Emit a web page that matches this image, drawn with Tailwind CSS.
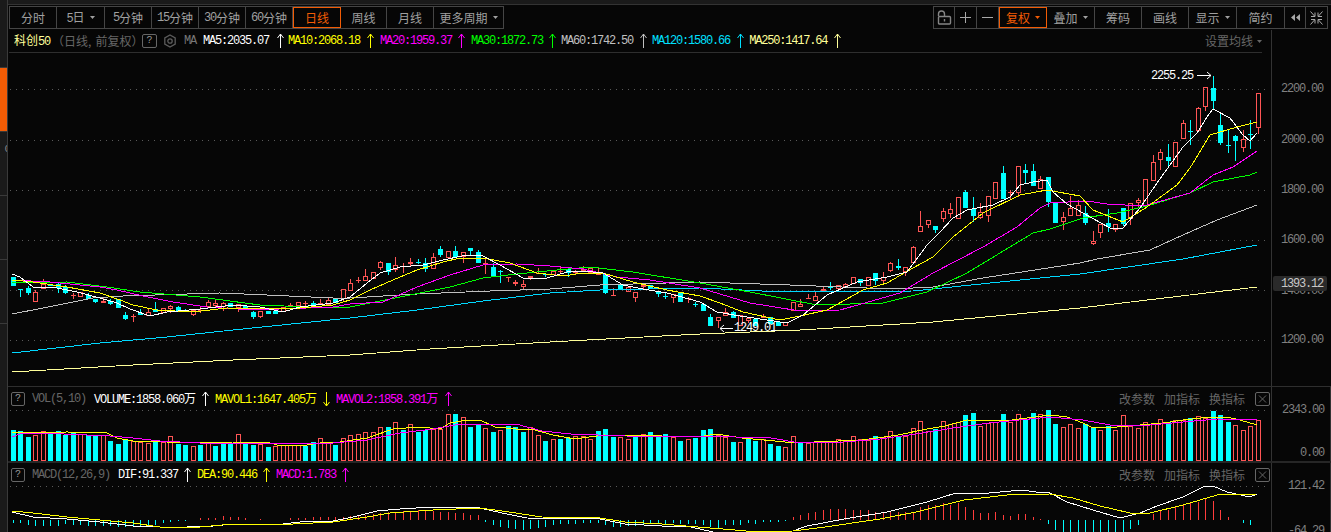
<!DOCTYPE html>
<html lang="zh">
<head>
<meta charset="utf-8">
<title>科创50</title>
<script src="https://cdn.jsdelivr.net/npm/@tailwindcss/browser@4"></script>
</head>
<body class="bg-[#060606]">
<div class="w-[1331px] h-[532px] flex overflow-hidden bg-[#060606] font-['Noto_Sans_CJK_SC',sans-serif] text-[12px] leading-none text-[#a0a0a0]">

  <aside class="w-[8px] h-full bg-[#1a1a1a] border-r border-[#3a3a3a] overflow-hidden shrink-0">
    <div class="h-[68px] border-b border-[#3a3a3a]"></div>
    <div class="h-[64px] bg-[#f25c05] border-b border-[#3a3a3a]"></div>
    <div class="h-[64px] border-b border-[#3a3a3a] flex items-center justify-end pb-[28px] text-[#888] font-['Liberation_Mono',monospace] text-[11px] -mr-[4px]">0</div>
    <div class="h-[64px] border-b border-[#3a3a3a]"></div>
    <div class="h-[64px] border-b border-[#3a3a3a]"></div>
  </aside>

  <main class="flex-1 flex flex-col min-w-0">
    <!-- toolbar -->
    <header class="h-[30px] shrink-0 flex flex-col">
      <div class="h-[5px] bg-[#1a1a1a] border-b border-[#333]"></div>
      <div class="flex justify-between pl-[1px] pr-[3px] pt-[1px]">
        <div class="flex h-[23px] border border-[#454545] border-r-0">
          <div class="w-[47px] flex items-center justify-center border-r border-[#454545]">分时</div>
          <div class="w-[48px] flex items-center justify-center gap-[5px] border-r border-[#454545]"><span><span class="font-['Liberation_Mono',monospace] text-[12px] tracking-[-1.2px]">5</span>日</span><svg width="5" height="3" viewBox="0 0 5 3"><path d="M0 0h5L2.5 3z" fill="#a0a0a0"/></svg></div>
          <div class="w-[47px] flex items-center justify-center border-r border-[#454545]"><span class="font-['Liberation_Mono',monospace] text-[12px] tracking-[-1.2px]">5</span>分钟</div>
          <div class="w-[47px] flex items-center justify-center border-r border-[#454545]"><span class="font-['Liberation_Mono',monospace] text-[12px] tracking-[-1.2px]">15</span>分钟</div>
          <div class="w-[47px] flex items-center justify-center border-r border-[#454545]"><span class="font-['Liberation_Mono',monospace] text-[12px] tracking-[-1.2px]">30</span>分钟</div>
          <div class="w-[47px] flex items-center justify-center border-r border-[#454545]"><span class="font-['Liberation_Mono',monospace] text-[12px] tracking-[-1.2px]">60</span>分钟</div>
          <div class="w-[48px] flex items-center justify-center text-[#f25c05] shadow-[inset_0_0_0_1px_#f25c05]">日线</div>
          <div class="w-[46px] flex items-center justify-center border-r border-[#454545]">周线</div>
          <div class="w-[47px] flex items-center justify-center border-r border-[#454545]">月线</div>
          <div class="w-[70px] flex items-center justify-center gap-[5px] border-r border-[#454545]">更多周期<svg width="5" height="3" viewBox="0 0 5 3"><path d="M0 0h5L2.5 3z" fill="#a0a0a0"/></svg></div>
        </div>
        <div class="flex h-[23px] border border-[#454545] border-r-0">
          <div class="w-[21px] flex items-center justify-center border-r border-[#454545]">
            <svg width="15" height="15" viewBox="0 0 15 15" fill="none" stroke="#858585" stroke-width="1.4"><rect x="1.5" y="6.5" width="12" height="7.5" rx="1"/><path d="M1.5 6V4a3 3 0 0 1 6 0v2.5"/><path d="M7.5 9v2.5"/></svg>
          </div>
          <div class="w-[22px] flex items-center justify-center border-r border-[#454545]"><svg width="11" height="11" viewBox="0 0 11 11" stroke="#a8a8a8"><path d="M0 5.5h11M5.5 0v11"/></svg></div>
          <div class="w-[22px] flex items-center justify-center border-r border-[#454545]"><svg width="11" height="11" viewBox="0 0 11 11" stroke="#a8a8a8"><path d="M0 5.5h11"/></svg></div>
          <div class="w-[48px] flex items-center justify-center gap-[5px] text-[#f25c05] shadow-[inset_0_0_0_1px_#f25c05]">复权<svg width="5" height="3" viewBox="0 0 5 3"><path d="M0 0h5L2.5 3z" fill="#f25c05"/></svg></div>
          <div class="w-[48px] flex items-center justify-center gap-[5px] border-r border-[#454545]">叠加<svg width="5" height="3" viewBox="0 0 5 3"><path d="M0 0h5L2.5 3z" fill="#a0a0a0"/></svg></div>
          <div class="w-[47px] flex items-center justify-center border-r border-[#454545]">筹码</div>
          <div class="w-[47px] flex items-center justify-center border-r border-[#454545]">画线</div>
          <div class="w-[48px] flex items-center justify-center gap-[5px] border-r border-[#454545]">显示<svg width="5" height="3" viewBox="0 0 5 3"><path d="M0 0h5L2.5 3z" fill="#a0a0a0"/></svg></div>
          <div class="w-[48px] flex items-center justify-center border-r border-[#454545]">简约</div>
          <div class="w-[21px] flex items-center justify-center border-r border-[#454545]"><svg width="9" height="7" viewBox="0 0 9 7" fill="#a8a8a8"><path d="M4 0v7L0 3.5zM9 0v7L5 3.5z"/></svg></div>
          <div class="w-[22px] flex items-center justify-center border-r border-[#454545]">
            <svg width="13" height="14" viewBox="0 0 13 14" fill="none" stroke="#a8a8a8"><path d="M.5.5l4 4.5M5 1.5V5.5H1M12.500 .5l-4 4.500M8 1.500V5.500h4M.500 13.500l4-4.500M5 12.500V8.500H1M12.500 13.500l-4-4.500M8 12.500V8.500h4"/></svg>
          </div>
        </div>
      </div>
    </header>

    <!-- main pane -->
    <section class="h-[356px] shrink-0 flex">
      <div class="w-[1263px] flex flex-col shrink-0">
        <div class="h-[23px] ml-[1px] w-[1253px] flex items-center border-b border-[#2e2e2e] font-['Liberation_Mono',monospace] text-[12px] tracking-[-1.2px]">
          <span class="ml-[5px] font-['Noto_Sans_CJK_SC',sans-serif] text-[12px] tracking-normal text-[#ffff99]">科创<span class="font-['Liberation_Mono',monospace] text-[12px] tracking-[-1.2px]">50</span></span>
          <span class="ml-[2px] w-[90px] font-['Noto_Sans_CJK_SC',sans-serif] text-[12px] tracking-normal text-[#666] whitespace-nowrap">（日线<span class="mr-[4px]">,</span>前复权）</span>
          <span class="w-[15px] h-[14px] border border-[#666] rounded-[2px] flex items-center justify-center text-[#999] text-[10px] tracking-normal">?</span>
          <svg class="ml-[6px]" width="14" height="14" viewBox="0 0 14 14" fill="none" stroke="#5c5c5c" stroke-width="1.300"><path d="M7 1l5.200 3v6L7 13l-5.200-3V4z"/><circle cx="7" cy="7" r="2.200"/></svg>
          <span class="ml-[7px] w-[19px] text-[#777]">MA</span>
          <span class="text-white">MA5:2035.07</span>
          <svg class="ml-[8px] text-white" width="7" height="14" viewBox="0 0 7 14" fill="none" stroke="currentColor"><path d="M3.500 0v14M.5 4l3-4 3 4"/></svg>
          <span class="ml-[4px] text-[#ffff00]">MA10:2068.18</span>
          <svg class="ml-[7px] text-[#ffff00]" width="7" height="14" viewBox="0 0 7 14" fill="none" stroke="currentColor"><path d="M3.500 0v14M.5 4l3-4 3 4"/></svg>
          <span class="ml-[6px] text-[#ff00ff]">MA20:1959.37</span>
          <svg class="ml-[6px] text-[#ff00ff]" width="7" height="14" viewBox="0 0 7 14" fill="none" stroke="currentColor"><path d="M3.500 0v14M.5 4l3-4 3 4"/></svg>
          <span class="ml-[6px] text-[#00ff00]">MA30:1872.73</span>
          <svg class="ml-[6px] text-[#00ff00]" width="7" height="14" viewBox="0 0 7 14" fill="none" stroke="currentColor"><path d="M3.500 0v14M.5 4l3-4 3 4"/></svg>
          <span class="ml-[5px] text-[#c0c0c0]">MA60:1742.50</span>
          <svg class="ml-[7px] text-[#c0c0c0]" width="7" height="14" viewBox="0 0 7 14" fill="none" stroke="currentColor"><path d="M3.500 0v14M.5 4l3-4 3 4"/></svg>
          <span class="ml-[5px] text-[#00e0ff]">MA120:1580.66</span>
          <svg class="ml-[7px] text-[#00e0ff]" width="7" height="14" viewBox="0 0 7 14" fill="none" stroke="currentColor"><path d="M3.500 0v14M.5 4l3-4 3 4"/></svg>
          <span class="ml-[5px] text-[#ffff99]">MA250:1417.64</span>
          <svg class="ml-[7px] text-[#ffff99]" width="7" height="14" viewBox="0 0 7 14" fill="none" stroke="currentColor"><path d="M3.500 0v14M.5 4l3-4 3 4"/></svg>
          <span class="ml-auto flex items-center gap-[4px] font-['Noto_Sans_CJK_SC',sans-serif] text-[12px] tracking-normal text-[#666]">设置均线<svg width="5" height="3" viewBox="0 0 5 3"><path d="M0 0h5L2.500 3z" fill="#666"/></svg></span>
        </div>
        <svg id="main" width="1263" height="333" viewBox="8 53 1263 333" class="block"></svg>
      </div>
      <div class="flex-1 relative border-l border-[#333] font-['Liberation_Mono',monospace] text-[12px] tracking-[-1.2px] text-[#808080]">
        <span class="absolute right-[8px] top-[53px]">2200.00</span>
        <span class="absolute right-[8px] top-[104px]">2000.00</span>
        <span class="absolute right-[8px] top-[154px]">1800.00</span>
        <span class="absolute right-[8px] top-[204px]">1600.00</span>
        <span class="absolute right-[8px] top-[255px]">1400.00</span>
        <span class="absolute right-[8px] top-[304px]">1200.00</span>
        <span class="absolute left-[1px] top-[246px] w-[54px] h-[15px] rounded-[2px] bg-[#2a2a2a] flex items-center justify-end pr-[4px] text-[#c8c8c8]">1393.12</span>
      </div>
    </section>

    <!-- volume pane -->
    <section class="h-[75px] shrink-0 flex border-t border-[#2e2e2e]">
      <div class="w-[1263px] shrink-0 flex flex-col">
        <div class="h-[23px] flex items-center pl-[3px] pr-[1px] font-['Liberation_Mono',monospace] text-[12px] tracking-[-1.2px]">
          <span class="w-[14px] h-[14px] border border-[#666] rounded-[2px] flex items-center justify-center text-[#999] text-[10px] tracking-normal">?</span>
          <span class="ml-[7px] w-[62px] text-[#666]">VOL(5,10)</span>
          <span class="text-white">VOLUME:1858.060<span class="font-['Noto_Sans_CJK_SC',sans-serif] text-[12px] tracking-normal">万</span></span>
          <svg class="ml-[6px] text-white" width="7" height="14" viewBox="0 0 7 14" fill="none" stroke="currentColor"><path d="M3.500 0v14M.5 4l3-4 3 4"/></svg>
          <span class="ml-[6px] text-[#ffff00]">MAVOL1:1647.405<span class="font-['Noto_Sans_CJK_SC',sans-serif] text-[12px] tracking-normal">万</span></span>
          <svg class="ml-[6px] rotate-180 text-[#ffff00]" width="7" height="14" viewBox="0 0 7 14" fill="none" stroke="currentColor"><path d="M3.500 0v14M.5 4l3-4 3 4"/></svg>
          <span class="ml-[6px] text-[#ff00ff]">MAVOL2:1858.391<span class="font-['Noto_Sans_CJK_SC',sans-serif] text-[12px] tracking-normal">万</span></span>
          <svg class="ml-[7px] text-[#ff00ff]" width="7" height="14" viewBox="0 0 7 14" fill="none" stroke="currentColor"><path d="M3.500 0v14M.5 4l3-4 3 4"/></svg>
          <span class="ml-auto flex items-center gap-[9px] font-['Noto_Sans_CJK_SC',sans-serif] text-[12px] tracking-normal text-[#666]">
            <span>改参数</span><span>加指标</span><span>换指标</span>
            <svg class="ml-[1px]" width="15" height="14" viewBox="0 0 15 14" fill="none" stroke="#666"><rect x=".5" y=".5" width="14" height="13" rx="1.500"/><path d="M4 3.500l7 7M11 3.500l-7 7"/></svg>
          </span>
        </div>
        <svg id="vol" width="1263" height="51" viewBox="8 410 1263 51" class="block"></svg>
      </div>
      <div class="flex-1 relative border-x border-[#333] font-['Liberation_Mono',monospace] text-[12px] tracking-[-1.2px] text-[#808080]">
        <span class="absolute right-[6px] top-[17px]">2343.00</span>
        <span class="absolute right-[6px] top-[60px]">0.00</span>
      </div>
    </section>
    <div class="h-[2px] shrink-0 bg-[#262626]"></div>

    <!-- MACD pane -->
    <section class="flex-1 flex min-h-0">
      <div class="w-[1263px] shrink-0 flex flex-col">
        <div class="h-[23px] flex items-center pl-[3px] pr-[1px] font-['Liberation_Mono',monospace] text-[12px] tracking-[-1.2px]">
          <span class="w-[14px] h-[14px] border border-[#666] rounded-[2px] flex items-center justify-center text-[#999] text-[10px] tracking-normal">?</span>
          <span class="ml-[7px] w-[86px] text-[#666]">MACD(12,26,9)</span>
          <span class="text-white">DIF:91.337</span>
          <svg class="ml-[6px] text-white" width="7" height="14" viewBox="0 0 7 14" fill="none" stroke="currentColor"><path d="M3.500 0v14M.5 4l3-4 3 4"/></svg>
          <span class="ml-[6px] text-[#ffff00]">DEA:90.446</span>
          <svg class="ml-[6px] text-[#ffff00]" width="7" height="14" viewBox="0 0 7 14" fill="none" stroke="currentColor"><path d="M3.500 0v14M.5 4l3-4 3 4"/></svg>
          <span class="ml-[6px] text-[#ff00ff]">MACD:1.783</span>
          <svg class="ml-[6px] text-[#ff00ff]" width="7" height="14" viewBox="0 0 7 14" fill="none" stroke="currentColor"><path d="M3.500 0v14M.5 4l3-4 3 4"/></svg>
          <span class="ml-auto flex items-center gap-[9px] font-['Noto_Sans_CJK_SC',sans-serif] text-[12px] tracking-normal text-[#666]">
            <span>改参数</span><span>加指标</span><span>换指标</span>
            <svg class="ml-[1px]" width="15" height="14" viewBox="0 0 15 14" fill="none" stroke="#666"><rect x=".5" y=".5" width="14" height="13" rx="1.500"/><path d="M4 3.500l7 7M11 3.500l-7 7"/></svg>
          </span>
        </div>
        <svg id="macd" width="1263" height="46" viewBox="8 486 1263 46" class="block"></svg>
      </div>
      <div class="flex-1 relative border-x border-[#333] font-['Liberation_Mono',monospace] text-[12px] tracking-[-1.2px] text-[#808080] overflow-hidden">
        <span class="absolute right-[6px] top-[17px]">121.42</span>
        <span class="absolute right-[6px] top-[62px]">-64.29</span>
      </div>
    </section>
  </main>
</div>

<script>
const NS='http://www.w3.org/2000/svg';
const RED='#ff5555',CY='#00ffff';
const cx=i=>Math.round(12.7+7.5*i);
function el(svg,n,a,t){const e=document.createElementNS(NS,n);for(const k in a)e.setAttribute(k,a[k]);if(t)e.textContent=t;svg.appendChild(e);return e;}
function rect(s,x,y,w,h,f){if(h<=0)return;el(s,'rect',{x,y,width:w,height:h,fill:f,'shape-rendering':'crispEdges'});}
function grid(s,y){el(s,'line',{x1:10,x2:1270,y1:y+.5,y2:y+.5,stroke:'#5a5a5a','stroke-dasharray':'1 5','shape-rendering':'crispEdges'});}
function line(s,p,c,w){el(s,'polyline',{points:p.map(q=>q.join(',')).join(' '),fill:'none',stroke:c,'stroke-width':w||1,'shape-rendering':'crispEdges'});}
function hollow(s,x,y,w,h,c){rect(s,x,y,w,1,c);rect(s,x,y+h-1,w,1,c);rect(s,x,y,1,h,c);rect(s,x+w-1,y,1,h,c);}

/* ---- candles: [cyan?, bodyTop, bodyBottom, wickTop, wickBottom] in crop coordinates ---- */
const candles=[];
function add(base,list){for(const r of list){const f=z=>base+z/3;candles.push([r[0],f(r[1]),f(r[2]),f(r[3]===undefined?r[1]:r[3]),f(r[4]===undefined?r[2]:r[4])]);}}
add(60,[[1,652,678],[1,688,690,688,710],[1,684,699,678,705],[0,696,725,690,725],[0,672,688,658,688],[1,672,678],[1,672,685,665,698],[1,680,698,675,702],[0,705,709,698,717],[0,695,710],[1,705,718,698,718],[1,717,725,717,730],[0,724,728,712,728],[1,723,731,718,735],[1,718,743],[1,765,776,757,780],[0,767,769,762,785],[1,758,764,748,764],[0,755,769,745,769],[1,748,755,726,755],[0,745,760],[0,739,747,735,758],[1,742,752,738,752],[1,752,757,748,757],[0,750,764,750,767],[0,750,752,742,760],[0,727,742,720,745],[0,730,737,720,742],[0,730,740,725,752],[1,730,742],[0,733,745,733,755],[1,738,748],[1,755,770,752,776],[0,752,770,752,773],[1,752,762],[1,752,762],[0,740,755],[0,735,742,730,742],[0,727,737],[0,728,730,722,737],[1,730,735,722,735],[0,730,733,716,733],[0,720,735,713,735],[1,713,728],[0,688,716,688,724]]);
add(230,[[0,160,182,148,182],[0,150,152,142,160],[0,139,152,118,152],[0,125,148],[0,97,113,92,120],[1,100,127,100,135],[0,106,120,82,125],[0,108,110,100,130],[0,95,102,85,107],[1,96,98,88,103],[1,100,117,85,125],[0,80,118,70,118],[1,58,75,48,80],[0,64,83],[1,64,80,48,82],[0,65,82,65,98],[1,55,63,55,77],[1,67,98,60,98],[0,100,105,85,132],[1,111,140,100,140],[1,122,124,120,158],[0,140,142,140,155],[0,157,163,150,168],[0,163,170,150,177],[0,137,143,137,150],[0,130,133,115,133],[1,132,134,132,141],[0,122,134],[0,124,126,112,132],[1,116,130,116,140],[0,125,127,120,133],[0,118,124,108,124],[0,115,130],[0,125,136,115,136],[1,132,188,132,192],[0,195,197,175,197],[1,165,178],[0,170,185],[0,185,203,185,215],[0,165,170,160,178],[1,165,177],[1,182,191,182,200],[1,198,200,190,207],[0,192,203,192,218],[1,190,215],[0,205,207,200,218],[1,222,224,215,230]]);
add(150,[[1,462,482],[1,500,527,492,527],[0,502,512,502,535],[0,485,497,475,497],[1,487,503,483,503],[0,495,527],[0,503,513,503,520],[1,507,528],[0,498,505,493,505],[1,500,523],[1,517,527],[0,517,527],[0,457,483],[0,462,470,448,470],[0,445,448,432,448],[0,438,452,425,452],[0,418,422,412,425],[1,410,412,397,420],[0,404,416],[0,403,412,398,412],[0,382,402],[1,388,400,388,407],[0,382,408],[1,370,393,370,405],[0,382,392,367,405],[0,340,362,335,367],[1,349,354,327,360],[0,352,365,352,377],[0,292,338,287,338],[0,229,245,183,245],[0,211,224,211,233],[1,228,240,228,248],[0,184,207,175,215],[0,178,191,158,203],[0,142,208],[1,126,175,120,175],[1,178,197,141,215],[0,187,203,160,208],[0,139,197,139,215],[0,97,148],[1,70,148,48,148],[0,125,127,120,150],[0,48,128,48,140],[1,60,68,42,100],[1,64,107,42,107],[0,88,117,78,117],[1,82,155,82,172]]);
add(60,[[1,427,490],[0,472,485,456,510],[0,445,467,408,467],[0,435,467,420,467],[1,460,490,438,495],[0,543,551,513,555],[0,492,518,492,533],[1,490,500,448,515],[0,492,510,492,515],[1,443,492,443,498],[0,430,477,430,495],[0,421,430,415,443],[0,357,442],[0,306,362,285,362],[0,277,299,267,330],[1,291,303,252,320],[0,247,320],[0,190,236,180,236],[1,213,215,180,255],[0,145,212,140,212],[0,82,140,82,152],[1,85,122,48,150],[1,196,248,160,255],[1,255,257,210,278],[1,228,242,225,303],[0,238,265,210,276],[1,222,224,180,267],[0,100,205,98,222]]);

/* ---- moving averages ---- */
const MA5=[[12,274],[20,277],[33,287],[57,288],[77,292],[100,298],[117,303],[130,309],[150,316],[167,312],[200,309],[233,305],[260,307],[283,312],[300,307],[333,303],[350,297],[367,283],[380,273],[400,267],[423,265],[443,260],[467,255],[483,256],[500,265],[523,278],[547,278],[567,272],[583,271],[603,273],[623,285],[643,289],[667,293],[700,302],[717,312],[740,316],[767,320],[787,323],[803,315],[827,295],[857,282],[887,277],[907,272],[927,245],[940,232],[953,218],[967,210],[993,205],[1010,197],[1020,185],[1033,182],[1047,180],[1053,192],[1067,204],[1083,213],[1110,228],[1123,228],[1140,208],[1157,183],[1183,147],[1197,133],[1207,117],[1213,109],[1230,118],[1243,135],[1250,141],[1257,133]];
const MA10=[[12,280],[33,282],[67,287],[100,293],[120,300],[133,305],[157,310],[193,312],[227,308],[267,309],[300,308],[333,305],[350,300],[370,290],[393,280],[417,270],[443,262],[460,258],[483,258],[510,263],[537,273],[563,276],[583,273],[603,273],[633,282],[667,290],[700,296],[720,303],[743,312],[780,320],[800,316],[827,310],[863,290],[887,283],[913,268],[933,257],[953,237],[983,213],[1020,195],[1047,190],[1080,196],[1093,210],[1123,222],[1147,207],[1177,185],[1190,168],[1210,135],[1237,127],[1257,122]];
const MA20=[[12,280],[50,282],[100,287],[117,290],[143,296],[173,302],[207,307],[253,310],[333,307],[350,304],[383,302],[417,287],[450,275],[483,265],[517,264],[550,266],[583,269],[617,277],[650,280],[700,288],[750,303],[800,311],[840,310],[900,293],[933,273],[983,247],[1017,227],[1040,208],[1050,203],[1087,201],[1107,204],[1143,206],[1190,193],[1213,175],[1233,167],[1257,151]];
const MA30=[[12,283],[67,282],[107,287],[140,292],[200,297],[260,305],[333,308],[350,307],[400,297],[450,287],[483,278],[517,274],[557,270],[590,267],[633,272],[700,283],[750,292],[817,305],[883,303],[927,292],[967,273],[1033,233],[1050,229],[1083,218],[1117,213],[1147,206],[1190,193],[1213,182],[1250,175],[1257,172]];
const MA60=[[12,314],[43,308],[93,298],[123,296],[220,293],[267,295],[333,298],[350,298],[417,294],[490,291],[550,289],[600,285],[700,282],[790,285],[893,289],[933,287],[983,278],[1080,263],[1097,259],[1150,250],[1183,235],[1217,220],[1257,205]];
const MA120=[[12,353],[100,343],[167,337],[233,330],[350,318],[417,310],[483,301],[550,293],[600,290],[700,288],[783,292],[913,291],[1000,282],[1080,274],[1183,259],[1257,245]];
const MA250=[[12,372],[133,365],[233,360],[350,355],[430,349],[550,342],[700,334],[800,330],[933,322],[1080,308],[1257,287]];

const m=document.getElementById('main');
[89,140,190,240,290,340].forEach(y=>grid(m,y));
candles.forEach((c,i)=>{
  const x=cx(i),col=c[0]?CY:RED,t=Math.round(c[1]),b=Math.round(c[2]),wt=Math.round(c[3]),wb=Math.round(c[4]);
  rect(m,x,wt,1,t-wt,col);rect(m,x,b,1,wb-b,col);
  if(c[0]||b-t<2){rect(m,x-2,t,5,Math.max(b-t,1),col);}
  else{hollow(m,x-2,t,5,b-t,col);}
});
line(m,MA250,'#ffff99');line(m,MA120,'#00d8ff');line(m,MA60,'#c0c0c0');line(m,MA30,'#00ff00');line(m,MA20,'#ff00ff');line(m,MA10,'#ffff00');line(m,MA5,'#ffffff');
const tx={'font-family':'Liberation Mono,monospace','font-size':12,'letter-spacing':'-1.2',fill:'#fff'};
el(m,'text',Object.assign({x:1151,y:79},tx),'2255.25');
el(m,'path',{d:'M1197 75.500h14M1207 72l4 3.500-4 3.500',fill:'none',stroke:'#fff'});
el(m,'text',Object.assign({x:734,y:331},tx),'1249.01');
el(m,'path',{d:'M720 328.500h13M724 325l-4 3.500 4 3.500',fill:'none',stroke:'#fff'});

/* ---- volume ---- */
const vol=[];
function addV(base,s){s.split(' ').forEach(t=>vol.push([t[0]==='c',base+parseInt(t.slice(1))/3]));}
addV(380,'c150 c153 c170 r165 r153 c155 c153 c165 c160 r162 c165 c165 r165 c183 c192 c178 r183 r185 r190 c187 r187 r168 c192 c195 r198 c195 r187 c197 c187 c192 r162 c185 c195 r192 c202 r197 r195 r195 r195 c197 c187 r175 r190 c195 r175 r165 r163 r155 r157 r140 c140 r127 c150 r133 c155 c150 r147 r147 r102 c102 r112 c140 c135');
addV(400,'r85 c96 r90 c78 c82 c96 r80 r106 c123 r118 c117 c115 r108 r108 r118 c93 c87 c112 r112 r118 c110 r102 c96 c108 c103 r112 c122 r118 c113 c90 c87 r106 r112 c125 r127 c118 c122 r118 c132 c137 r142 r108 c130 r130 r125 r123 r122 r118 r122 r108 r118 r120 c108 r110 r93 c108 r108 r85 r63 r92 c88 r63 r72 r66 c45 c38 r78 r68 r66 c42 r66 r42 c58 c38 r42 c30');
addV(380,'c132 r142 r133 r145 c133 c140 r150 c138 r150 r105 r137 r145 r125 r128 r118 c125 r120 r120 c114 r108 r115 c92 c105 c126 r135 r150 r138 r120');
const v=document.getElementById('vol');
grid(v,410);
vol.forEach((b,i)=>{const x=cx(i)-2,t=Math.round(b[1]),h=461-t;if(b[0])rect(v,x,t,5,h,CY);else hollow(v,x,t,5,h,RED);});
const VY=[[12,432],[22,432],[33,433],[67,432],[107,433],[117,438],[133,441],[167,442],[200,443],[233,442],[267,442],[277,445],[307,445],[320,443],[340,442],[367,438],[393,429],[420,427],[440,429],[450,423],[467,420],[480,420],[495,427],[516,429],[531,429],[553,435],[575,439],[604,435],[662,436],[698,437],[716,434],[742,438],[764,440],[796,443],[814,442],[862,440],[898,435],[927,429],[945,426],[967,420],[1004,421],[1050,415],[1067,417],[1083,423],[1093,428],[1117,427],[1140,425],[1163,423],[1183,420],[1210,417],[1227,417],[1240,420],[1257,425]];
const VM=[[12,437],[20,434],[40,433],[110,436],[133,438],[160,441],[200,443],[267,443],[333,443],[367,440],[400,433],[433,429],[460,424],[480,424],[516,424],[542,431],[571,434],[625,436],[735,437],[771,438],[800,443],[844,442],[880,439],[916,434],[953,428],[989,423],[1050,417],[1083,420],[1110,425],[1150,425],[1183,422],[1217,419],[1257,420]];
line(v,VY,'#ffff00');line(v,VM,'#ff00ff');

/* ---- MACD ---- */
const M=[];
[-8,-8,-15,-17,-17,-17,-17,-12,-15,-15,-17,-17,-17,-17,-20,-20,-20,-22,-18,-15,-8,-5,-3,-2,-1].forEach(z=>M.push(z/3));
[1.500,2,2,3.500,2.500,3,2,0,1,0,0,0,1.500,2,2,3,3,3,3,3,4,5,5,6,7,8,8,9,9,10,10,9,8,8,7,7,5,5].forEach(p=>M.push(p));
[6,14,22,25,28,30,28,25,22,16,12,12,12,8,8,8,15,22,20,18,18,14,10,10,12,10,12,12,12,14,22,24,16,16,14,10,12,5,5,5,3].forEach(z=>M.push(-z/3));
[8,15,20,25,30,33,33,33,30,30,30,25,25,28,25,25,25,40,45,45,50,45,50,40,30,22,22,25,15,13,18,18,10,3].forEach(z=>M.push(z/3));
M.push(-4);
[-30,-36,-36,-36,-36,-36,-36,-36,-36,-36,-26,-14,0,18,30,30,40,48,50,55,63,57,30,10,0,-8,-14,0].forEach(z=>M.push(z/3));
const d=document.getElementById('macd');
grid(d,486);
M.forEach((p,i)=>{const x=cx(i),h=Math.round(Math.abs(p));if(p>0)rect(d,x,520-h,1,h,'#ff3c3c');else if(p<0)rect(d,x,520,1,h,CY);});
const DW=[[12,512],[33,517],[67,519],[100,522],[133,526],[160,527],[187,527],[213,526],[233,524],[283,524],[300,522],[333,521],[353,517],[377,511],[400,509],[433,507],[467,507],[480,508],[502,513],[527,518],[600,519],[625,524],[662,526],[691,527],[713,532],[727,532],[749,532],[793,531],[807,526],[844,519],[887,512],[927,502],[956,493],[989,493],[1022,490],[1036,492],[1050,493],[1067,502],[1093,510],[1120,518],[1140,513],[1157,506],[1183,497],[1203,487],[1213,486],[1227,492],[1250,497],[1257,494]];
const DY=[[12,511],[33,513],[67,517],[100,520],[133,523],[160,527],[200,527],[233,524],[293,524],[333,522],[367,517],[390,513],[433,510],[480,508],[509,512],[542,517],[600,518],[625,522],[662,524],[698,527],[735,530],[756,532],[793,531],[825,527],[880,519],[916,512],[964,500],[1007,495],[1050,494],[1073,498],[1100,506],[1130,513],[1150,513],[1183,505],[1217,495],[1257,494]];
line(d,DW,'#ffffff');line(d,DY,'#ffff00');
</script>
</body>
</html>
